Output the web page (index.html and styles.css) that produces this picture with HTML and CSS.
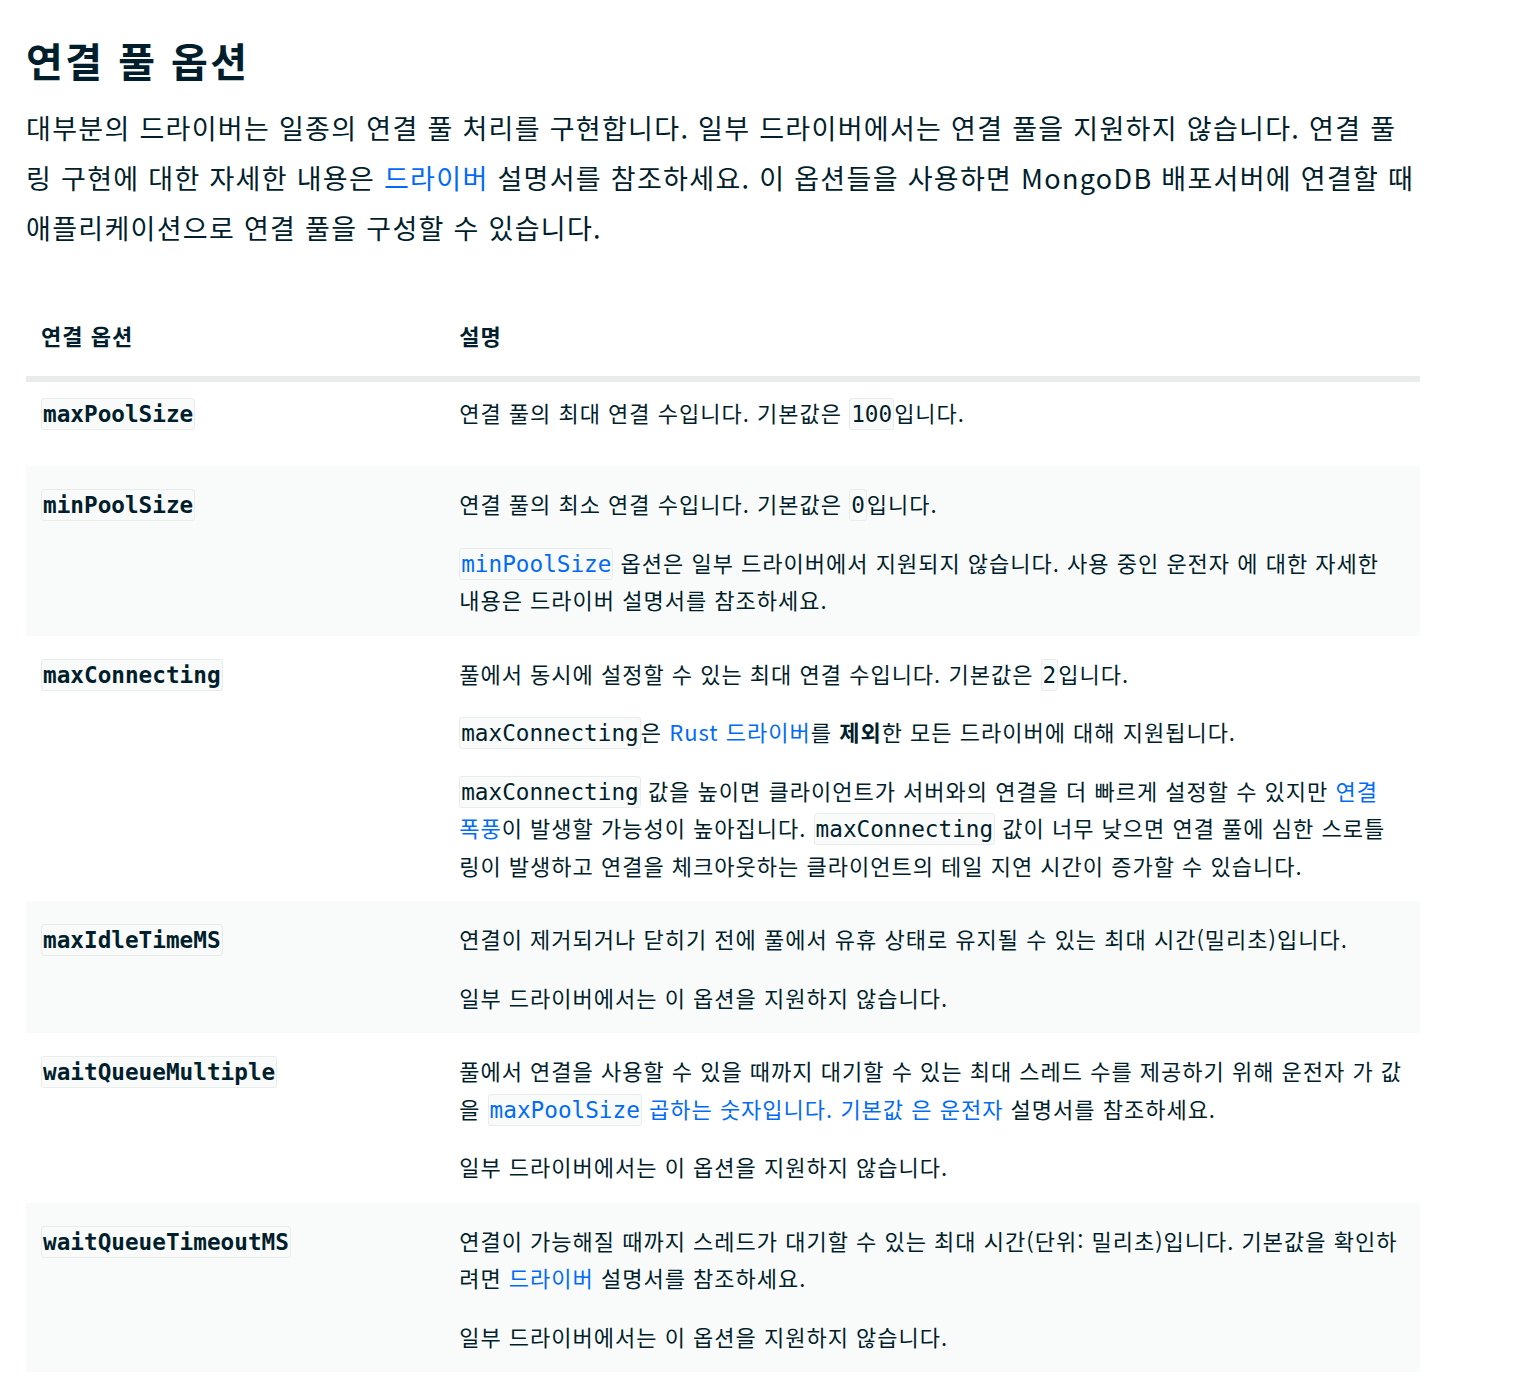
FILE: index.html
```html
<!DOCTYPE html>
<html lang="ko">
<head>
    <meta charset="UTF-8">
    <meta name="viewport" content="width=device-width, initial-scale=1.0">
    <title>연결 풀 옵션</title>
    <link rel="stylesheet" href="styles.css">
</head>
<body>
    <div class="page">
        <h1>연결 풀 옵션</h1>
        <p class="intro">대부분의 드라이버는 일종의 연결 풀 처리를 구현합니다. 일부 드라이버에서는 연결 풀을 지원하지 않습니다. 연결 풀링 구현에 대한 자세한 내용은 <a href="#">드라이버</a> 설명서를 참조하세요. 이 옵션들을 사용하면 MongoDB 배포서버에 연결할 때 애플리케이션으로 연결 풀을 구성할 수 있습니다.</p>

        <table class="options">
            <thead>
                <tr>
                    <th class="col-name">연결 옵션</th>
                    <th>설명</th>
                </tr>
            </thead>
            <tbody>
                <tr class="first">
                    <td><code class="opt">maxPoolSize</code></td>
                    <td>
                        <p>연결 풀의 최대 연결 수입니다. 기본값은 <code>100</code>입니다.</p>
                    </td>
                </tr>
                <tr>
                    <td><code class="opt">minPoolSize</code></td>
                    <td>
                        <p>연결 풀의 최소 연결 수입니다. 기본값은 <code>0</code>입니다.</p>
                        <p><a href="#"><code>minPoolSize</code></a> 옵션은 일부 드라이버에서 지원되지 않습니다. 사용 중인 운전자 에 대한 자세한 내용은 드라이버 설명서를 참조하세요.</p>
                    </td>
                </tr>
                <tr>
                    <td><code class="opt">maxConnecting</code></td>
                    <td>
                        <p>풀에서 동시에 설정할 수 있는 최대 연결 수입니다. 기본값은 <code>2</code>입니다.</p>
                        <p><code>maxConnecting</code>은 <a href="#">Rust 드라이버</a>를 <strong>제외</strong>한 모든 드라이버에 대해 지원됩니다.</p>
                        <p><code>maxConnecting</code> 값을 높이면 클라이언트가 서버와의 연결을 더 빠르게 설정할 수 있지만 <a href="#">연결 폭풍</a>이 발생할 가능성이 높아집니다. <code>maxConnecting</code> 값이 너무 낮으면 연결 풀에 심한 스로틀링이 발생하고 연결을 체크아웃하는 클라이언트의 테일 지연 시간이 증가할 수 있습니다.</p>
                    </td>
                </tr>
                <tr>
                    <td><code class="opt">maxIdleTimeMS</code></td>
                    <td>
                        <p>연결이 제거되거나 닫히기 전에 풀에서 유휴 상태로 유지될 수 있는 최대 시간(밀리초)입니다.</p>
                        <p>일부 드라이버에서는 이 옵션을 지원하지 않습니다.</p>
                    </td>
                </tr>
                <tr>
                    <td><code class="opt">waitQueueMultiple</code></td>
                    <td>
                        <p>풀에서 연결을 사용할 수 있을 때까지 대기할 수 있는 최대 스레드 수를 제공하기 위해 운전자 가 값을 <a href="#"><code>maxPoolSize</code> 곱하는 숫자입니다. 기본값 은 운전자</a> 설명서를 참조하세요.</p>
                        <p>일부 드라이버에서는 이 옵션을 지원하지 않습니다.</p>
                    </td>
                </tr>
                <tr>
                    <td><code class="opt">waitQueueTimeoutMS</code></td>
                    <td>
                        <p>연결이 가능해질 때까지 스레드가 대기할 수 있는 최대 시간(단위: 밀리초)입니다. 기본값을 확인하려면 <a href="#">드라이버</a> 설명서를 참조하세요.</p>
                        <p>일부 드라이버에서는 이 옵션을 지원하지 않습니다.</p>
                    </td>
                </tr>
            </tbody>
        </table>
    </div>
</body>
</html>
```

FILE: styles.css
```css
body, html {
    margin: 0;
    padding: 0;
    background: #ffffff;
    color: #001e2b;
    font-family: "Noto Sans CJK KR", "Noto Sans", sans-serif;
    letter-spacing: 1px;
}

a {
    color: #016bf8;
    text-decoration: none;
}

.page {
    width: 1394px;
    padding: 0 26px;
}

h1 {
    margin: 34px 0 17px;
    font-size: 40px;
    line-height: 52px;
    font-weight: 700;
    letter-spacing: 2.45px;
}

.intro {
    margin: 0 0 45px;
    font-size: 27px;
    line-height: 50px;
    letter-spacing: 1.3px;
}

.options {
    width: 100%;
    border-collapse: collapse;
    font-size: 22px;
    line-height: 37.5px;
}

.options th {
    text-align: left;
    font-weight: 700;
    padding: 19px 15px 21px;
    border-bottom: 6px solid #e8edeb;
}

.options .col-name {
    width: 30%;
    box-sizing: border-box;
}

.options td {
    vertical-align: top;
    padding: 19px 15px 17px;
}

.options tr.first td {
    padding-top: 12px;
    padding-bottom: 35px;
}

.options tbody tr:nth-child(even) {
    background: #f9fbfa;
}

.options p {
    margin: 0 0 21px;
}

.options p:last-child {
    margin-bottom: 0;
}

code {
    font-family: "DejaVu Sans Mono", "Liberation Mono", monospace;
    font-size: 22.7px;
    line-height: 1;
    letter-spacing: 0;
    background: #f9fbfa;
    border: 1px solid #e8edeb;
    border-radius: 3px;
    padding: 2px 1px;
}

code.opt {
    font-weight: 700;
}

strong {
    font-weight: 700;
}
```
